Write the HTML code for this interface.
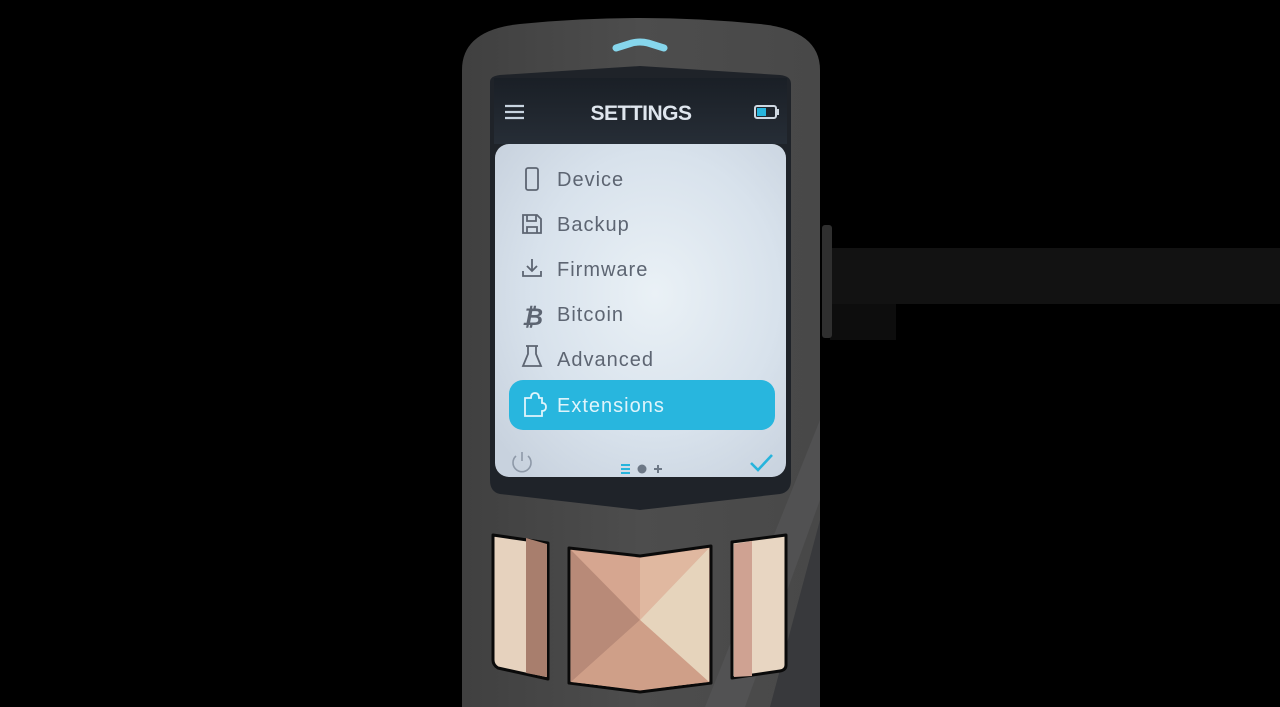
<!DOCTYPE html>
<html><head><meta charset="utf-8"><style>
html,body{margin:0;padding:0;background:#000;width:1280px;height:707px;overflow:hidden}
svg{display:block}
text{font-family:"Liberation Sans",sans-serif}
</style></head><body>
<svg width="1280" height="707" viewBox="0 0 1280 707">
<defs>
<linearGradient id="body" x1="0" x2="1" y1="0" y2="0">
<stop offset="0" stop-color="#404040"/><stop offset="0.5" stop-color="#4d4d4d"/><stop offset="1" stop-color="#484848"/>
</linearGradient>
<radialGradient id="scr" cx="0.55" cy="0.45" r="0.7">
<stop offset="0" stop-color="#eaf1f6"/><stop offset="0.6" stop-color="#d8e2ec"/><stop offset="1" stop-color="#c8d2de"/>
</radialGradient>
<linearGradient id="hdr" x1="0" x2="0" y1="0" y2="1">
<stop offset="0" stop-color="#1a1f26"/><stop offset="1" stop-color="#262d36"/>
</linearGradient>
</defs>
<rect x="830" y="248" width="450" height="56" fill="#121212"/>
<rect x="830" y="304" width="66" height="36" fill="#0d0d0d"/>
<rect x="822" y="225" width="10" height="113" rx="3" fill="#2f2f2f"/>
<path d="M462 707 L462 70 Q462 30 520 24 Q640 12 760 24 Q820 30 820 70 L820 707 Z" fill="url(#body)"/>
<path d="M820 420 L820 500 L745 707 L705 707 Z" fill="#5a5a5c" opacity="0.5"/>
<path d="M820 520 L820 707 L770 707 Z" fill="#38393c"/>
<path d="M616 48 L632 43 Q640 41 648 43 L664 48" stroke="#86d6ec" stroke-width="7" fill="none" stroke-linecap="round" stroke-linejoin="round"/>
<path d="M490 82 Q490 76 500 75 L640 66 L780 75 Q791 76 791 84 L791 480 Q791 492 780 494 L640 510 L500 494 Q490 492 490 480 Z" fill="#1f2329"/>
<rect x="494" y="78" width="293" height="66" fill="url(#hdr)"/>
<rect x="495" y="144" width="291" height="333" rx="14" fill="url(#scr)"/>
<g stroke="#c8d4e0" stroke-width="2.2"><line x1="505" y1="106" x2="524" y2="106"/><line x1="505" y1="112" x2="524" y2="112"/><line x1="505" y1="118" x2="524" y2="118"/></g>
<text x="641" y="120" text-anchor="middle" font-size="21" font-weight="bold" fill="#dfe6ee" letter-spacing="-0.5">SETTINGS</text>
<rect x="755" y="106" width="21" height="12" rx="2" fill="none" stroke="#cfd8e2" stroke-width="2"/>
<rect x="757" y="108" width="9" height="8" fill="#27b4dc"/><rect x="776" y="109" width="3" height="6" fill="#cfd8e2"/>
<rect x="509" y="380" width="266" height="50" rx="14" fill="#28b6de"/>
<g font-size="20" fill="#5d6572" letter-spacing="1">
<text x="557" y="186">Device</text>
<text x="557" y="231">Backup</text>
<text x="557" y="276">Firmware</text>
<text x="557" y="321">Bitcoin</text>
<text x="557" y="366">Advanced</text>
<text x="557" y="412" fill="#dff4fb">Extensions</text>
</g>
<g fill="none" stroke="#5d6572" stroke-width="1.8">
<rect x="526" y="168" width="12" height="22" rx="2"/>
<path d="M523 215 h14 l4 4 v14 h-18 z M527 215 v6 h9 v-6 M527 233 v-6 h10 v6"/>
<path d="M532 259 v11 M527 266 l5 5 l5 -5 M523 271 v5 h18 v-5"/>
<path d="M526 346 h12 M528 346 v8 l-5 12 h18 l-5 -12 v-8"/>
</g>
<text x="522" y="325" font-size="24" font-weight="bold" fill="#5d6572" font-style="italic">₿</text>
<path d="M525 398 h6 q0 -5 4 -5 q4 0 4 5 h3 v5 q4 0 4 4 q0 4 -4 4 v5 h-17 z" fill="none" stroke="#e0f4fb" stroke-width="1.8"/>
<path d="M516 456 a9 9 0 1 0 12 0 M522 452 v9" fill="none" stroke="#8e99a8" stroke-width="1.6"/>
<g fill="#27b4dc"><rect x="621" y="464" width="9" height="2"/><rect x="621" y="468" width="9" height="2"/><rect x="621" y="472" width="9" height="2"/></g>
<circle cx="642" cy="469" r="4.5" fill="#6d7886"/>
<path d="M654 469 h8 M658 465 v8" stroke="#6d7886" stroke-width="2"/>
<path d="M751 463 l7 7 l14 -15" fill="none" stroke="#27b4dc" stroke-width="2.6"/>
<g stroke="#0a0a0a" stroke-width="3" stroke-linejoin="round">
<path d="M493 535 L548 543 L548 679 L498 668 Q493 665 493 660 Z" fill="#e6d2be"/>
<path d="M569 548 L640 556 L711 546 L711 683 L640 692 L569 683 Z" fill="#d6a690"/>
<path d="M732 542 L786 535 L786 665 Q786 670 780 671 L732 678 Z" fill="#e8d6c2"/>
</g>
<path d="M526 538 L547 544 L547 677 L526 673 Z" fill="#a87e6d"/>
<path d="M571 550 L640 620 L571 682 Z" fill="#b88a78"/>
<path d="M640 558 L709 548 L640 620 Z" fill="#e0b8a0"/>
<path d="M709 548 L709 682 L640 620 Z" fill="#e6d4bc"/>
<path d="M571 682 L640 620 L709 682 L640 690 Z" fill="#cf9f88"/>
<path d="M734 544 L752 541 L752 676 L734 677 Z" fill="#cfa292"/>
</svg>
</body></html>
